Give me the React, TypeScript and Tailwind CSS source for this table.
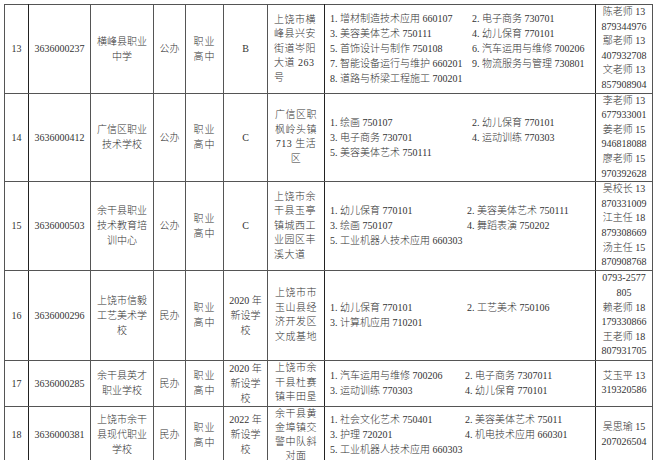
const rows = [
  {
    no: "13",
    code: "3636000237",
    name: ["横峰县职业", "中学"],
    kind: "公办",
    grade: ["B"],
    addr: ["上饶市横", "峰县兴安", "街道岑阳", "大道 263", "号"],
    addrLeft: true,
    cols: "grid-cols-[142px_1fr]",
    majors: [
      ["1. 增材制造技术应用 660107", "2. 电子商务 730701"],
      ["3. 美容美体艺术 750111", "4. 幼儿保育 770101"],
      ["5. 首饰设计与制作 750108", "6. 汽车运用与维修 700206"],
      ["7. 智能设备运行与维护 660201", "9. 物流服务与管理 730801"],
      ["8. 道路与桥梁工程施工 700201", ""],
    ],
    contact: ["陈老师 13", "879344976", "鄢老师 13", "407932708", "文老师 13", "857908904"],
    h: "h-[88px]",
  },
  {
    no: "14",
    code: "3636000412",
    name: ["广信区职业", "技术学校"],
    kind: "公办",
    grade: ["C"],
    addr: ["广信区职", "枫岭头镇", "713 生活", "区"],
    addrLeft: false,
    cols: "grid-cols-[142px_1fr]",
    majors: [
      ["1. 绘画 750107", "2. 幼儿保育 770101"],
      ["3. 电子商务 730701", "4. 运动训练 770303"],
      ["5. 美容美体艺术 750111", ""],
    ],
    contact: ["李老师 13", "677933001", "姜老师 15", "946818088", "廖老师 15", "970392628"],
    h: "h-[88px]",
  },
  {
    no: "15",
    code: "3636000503",
    name: ["余干县职业", "技术教育培", "训中心"],
    kind: "公办",
    grade: ["C"],
    addr: ["上饶市余", "干县玉亭", "镇城西工", "业园区丰", "溪大道"],
    addrLeft: true,
    cols: "grid-cols-[137px_1fr]",
    majors: [
      ["1. 幼儿保育 770101", "2. 美容美体艺术 750111"],
      ["3. 绘画 750107", "4. 舞蹈表演 750202"],
      ["5. 工业机器人技术应用 660303", ""],
    ],
    contact: ["吴校长 13", "870331009", "江主任 18", "879308669", "汤主任 15", "870908768"],
    h: "h-[87px]",
  },
  {
    no: "16",
    code: "3636000296",
    name: ["上饶市信毅", "工艺美术学", "校"],
    kind: "民办",
    grade: ["2020 年", "新设学", "校"],
    addr: ["上饶市市", "玉山县经", "济开发区", "文成基地"],
    addrLeft: false,
    cols: "grid-cols-[137px_1fr]",
    majors: [
      ["1. 幼儿保育 770101", "2. 工艺美术 750106"],
      ["3. 计算机应用 710201", ""],
    ],
    contact: ["0793-2577", "805", "赖老师 18", "179330866", "王老师 18", "807931705"],
    h: "h-[90px]",
  },
  {
    no: "17",
    code: "3636000285",
    name: ["余干县英才", "职业学校"],
    kind: "民办",
    grade: ["2020 年", "新设学", "校"],
    addr: ["上饶市余", "干县杜赛", "镇丰田垦"],
    addrLeft: false,
    cols: "grid-cols-[135px_1fr]",
    majors: [
      ["1. 汽车运用与维修 700206", "2. 电子商务 7307011"],
      ["3. 运动训练 770303", "4. 幼儿保育 770101"],
    ],
    contact: ["艾玉平 13", "319320586"],
    h: "h-[45px]",
  },
  {
    no: "18",
    code: "3636000381",
    name: ["上饶市余干", "县现代职业", "学校"],
    kind: "民办",
    grade: ["2022 年", "新设学", "校"],
    addr: ["余干县黄", "金埠镇交", "警中队斜", "对面"],
    addrLeft: false,
    cols: "grid-cols-[135px_1fr]",
    majors: [
      ["1. 社会文化艺术 750401", "2. 美容美体艺术 75011"],
      ["3. 护理 720201", "4. 机电技术应用 660301"],
      ["5. 工业机器人技术应用 660303", ""],
    ],
    contact: ["吴思瑜 15", "207026504"],
    h: "h-[56px]",
  },
];

const td = "border border-[#555] p-0 align-middle";

const Lines = ({ items, className }: { items: string[]; className?: string }) => (
  <div className={className}>
    {items.map((t, i) => (
      <div key={i} className="whitespace-nowrap">
        {t}
      </div>
    ))}
  </div>
);

export default function App() {
  return (
    <div className="w-[658px] h-[460px] bg-white pt-1 pl-1 overflow-hidden">
      <table
        className="table-fixed border-collapse text-[10px] text-[#333] font-light"
        style={{ fontFamily: '"Liberation Serif", "Noto Sans CJK SC", serif' }}
      >
        <colgroup>
          <col className="w-[24px]" />
          <col className="w-[62px]" />
          <col className="w-[63px]" />
          <col className="w-[32px]" />
          <col className="w-[38px]" />
          <col className="w-[44px]" />
          <col className="w-[57px]" />
          <col className="w-[271px]" />
          <col className="w-[57px]" />
        </colgroup>
        <tbody>
          {rows.map((r) => (
            <tr key={r.no} className={r.h}>
              <td className={`${td} text-center border-r-[#222]`}>{r.no}</td>
              <td className={`${td} text-center`}>{r.code}</td>
              <td className={td}>
                <Lines items={r.name} className="text-center leading-[15px]" />
              </td>
              <td className={`${td} text-center`}>{r.kind}</td>
              <td className={td}>
                <Lines items={["职业", "高中"]} className="text-center leading-[15px] tracking-[1px]" />
              </td>
              <td className={td}>
                <Lines items={r.grade} className="text-center leading-[15px]" />
              </td>
              <td className={`${td} border-r-[#222]`}>
                <Lines
                  items={r.addr}
                  className={
                    (r.addrLeft ? "text-left pl-[6px] " : "text-center ") +
                    (r.no === "18" ? "leading-[14px] " : "leading-[14.5px] ") +
                    "tracking-[0.5px]"
                  }
                />
              </td>
              <td className={`${td} border-r-[#222]`}>
                <div className={`grid ${r.cols} pl-[5px] leading-[15px]`}>
                  {r.majors.map((pair, i) => (
                    <div key={i} className="contents">
                      <div className="whitespace-nowrap">{pair[0]}</div>
                      <div className="whitespace-nowrap">{pair[1]}</div>
                    </div>
                  ))}
                </div>
              </td>
              <td className={td}>
                <Lines items={r.contact} className="text-center leading-[14.6px]" />
              </td>
            </tr>
          ))}
        </tbody>
      </table>
    </div>
  );
}
